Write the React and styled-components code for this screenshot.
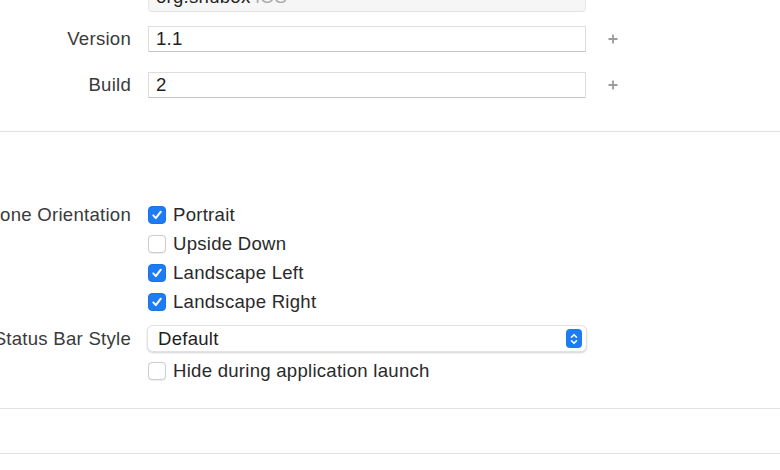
import React from "react";
import styled, { createGlobalStyle } from "styled-components";

const GlobalStyle = createGlobalStyle`
  html, body {
    margin: 0;
    padding: 0;
    background: #ffffff;
    overflow: hidden;
  }
  body {
    font-family: "Liberation Sans", Arial, sans-serif;
    font-size: 18.6px;
    letter-spacing: 0.25px;
    color: #222222;
  }
`;

const Page = styled.div`
  width: 780px;
  height: 470px;
  overflow: hidden;
  background: #ffffff;
`;

const Section = styled.section`
  display: flex;
  flex-direction: column;
  padding: ${(p) => p.$pad || "0"};
  margin-top: ${(p) => p.$offset || "0"};
  min-height: ${(p) => p.$minHeight || "0"};
  border-bottom: 1px solid #e1e1e1;
  box-sizing: border-box;
`;

const Row = styled.div`
  display: flex;
  align-items: ${(p) => (p.$top ? "flex-start" : "center")};
  margin-top: ${(p) => p.$gap || 0}px;
`;

const LabelCell = styled.div`
  width: 131px;
  flex-shrink: 0;
  display: flex;
  justify-content: flex-end;
  margin-right: 17px;
`;

const Label = styled.span`
  white-space: nowrap;
  color: #3a3a3a;
  line-height: ${(p) => p.$lh || "26px"};
`;

const Field = styled.div`
  width: 438px;
  height: 26px;
  box-sizing: border-box;
  display: flex;
  align-items: center;
  padding: 0 0 ${(p) => (p.$disabled ? "5px" : "0")} 7px;
  background: ${(p) => (p.$disabled ? "#f6f6f6" : "#ffffff")};
  border: 1px solid ${(p) => (p.$disabled ? "#e8e8e8" : "#dddddd")};
  border-bottom-color: ${(p) => (p.$disabled ? "#e3e3e3" : "#c4c4c4")};
  border-radius: ${(p) => (p.$disabled ? "4px" : "1px")};
  color: #1f1f1f;
  white-space: nowrap;
`;

const Suffix = styled.span`
  color: #ababab;
  margin-left: 5px;
`;

const AddButton = styled.span`
  margin-left: 22px;
  width: 10px;
  height: 10px;
  display: flex;
`;

const CheckList = styled.div`
  display: flex;
  flex-direction: column;
`;

const CheckRow = styled.label`
  display: flex;
  align-items: center;
  height: 29px;
  color: #2a2a2a;
`;

const Box = styled.span`
  width: 18px;
  height: 18px;
  box-sizing: border-box;
  border-radius: 4px;
  margin-right: 7px;
  display: flex;
  align-items: center;
  justify-content: center;
  background: ${(p) => (p.$checked ? "#1d7cf4" : "#ffffff")};
  border: 1px solid ${(p) => (p.$checked ? "#1a74e6" : "#cdcdcd")};
  box-shadow: ${(p) => (p.$checked ? "none" : "0 0.5px 1px rgba(0,0,0,0.08)")};
`;

const Select = styled.div`
  width: 440px;
  height: 27px;
  margin-left: -1px;
  box-sizing: border-box;
  display: flex;
  align-items: center;
  justify-content: space-between;
  padding: 0 4px 0 10px;
  background: #ffffff;
  border: 1px solid #e2e2e2;
  border-radius: 6px;
  box-shadow: 0 1px 2px rgba(0, 0, 0, 0.18);
  color: #1f1f1f;
`;

const Stepper = styled.span`
  width: 16px;
  height: 19px;
  border-radius: 4px;
  background: #1d7cf4;
  display: flex;
  align-items: center;
  justify-content: center;
`;

const Plus = () => (
  <AddButton>
    <svg width="10" height="10" viewBox="0 0 10 10">
      <path d="M5 0.5v9M0.5 5h9" stroke="#9b9b9b" strokeWidth="1.8" />
    </svg>
  </AddButton>
);

const Check = ({ checked, children }) => (
  <CheckRow>
    <Box $checked={checked}>
      {checked && (
        <svg width="12" height="12" viewBox="0 0 12 12">
          <path
            d="M2.3 6.4l2.5 2.7 5-6.4"
            fill="none"
            stroke="#ffffff"
            strokeWidth="2"
            strokeLinecap="round"
            strokeLinejoin="round"
          />
        </svg>
      )}
    </Box>
    {children}
  </CheckRow>
);

const orientations = [
  { name: "Portrait", checked: true },
  { name: "Upside Down", checked: false },
  { name: "Landscape Left", checked: true },
  { name: "Landscape Right", checked: true },
];

const App = () => (
  <Page>
    <GlobalStyle />
    <Section $offset="-14px" $pad="0 0 33px 0">
      <Row>
        <LabelCell />
        <Field $disabled>
          org.shubox<Suffix>iOS</Suffix>
        </Field>
      </Row>
      <Row $gap={14}>
        <LabelCell>
          <Label>Version</Label>
        </LabelCell>
        <Field>1.1</Field>
        <Plus />
      </Row>
      <Row $gap={20}>
        <LabelCell>
          <Label>Build</Label>
        </LabelCell>
        <Field>2</Field>
        <Plus />
      </Row>
    </Section>

    <Section $pad="68px 0 23px 0">
      <Row $top>
        <LabelCell>
          <Label $lh="29px">iPhone Orientation</Label>
        </LabelCell>
        <CheckList>
          {orientations.map((o) => (
            <Check key={o.name} checked={o.checked}>
              {o.name}
            </Check>
          ))}
        </CheckList>
      </Row>
      <Row $gap={9}>
        <LabelCell>
          <Label>Status Bar Style</Label>
        </LabelCell>
        <Select>
          Default
          <Stepper>
            <svg width="10" height="14" viewBox="0 0 10 14">
              <path
                d="M2.5 5.2L5 2.7l2.5 2.5M2.5 8.8L5 11.3l2.5-2.5"
                fill="none"
                stroke="#ffffff"
                strokeWidth="1.6"
                strokeLinecap="round"
                strokeLinejoin="round"
              />
            </svg>
          </Stepper>
        </Select>
      </Row>
      <Row $gap={4}>
        <LabelCell />
        <Check checked={false}>Hide during application launch</Check>
      </Row>
    </Section>

    <Section $minHeight="45px" />
  </Page>
);

export default App;
